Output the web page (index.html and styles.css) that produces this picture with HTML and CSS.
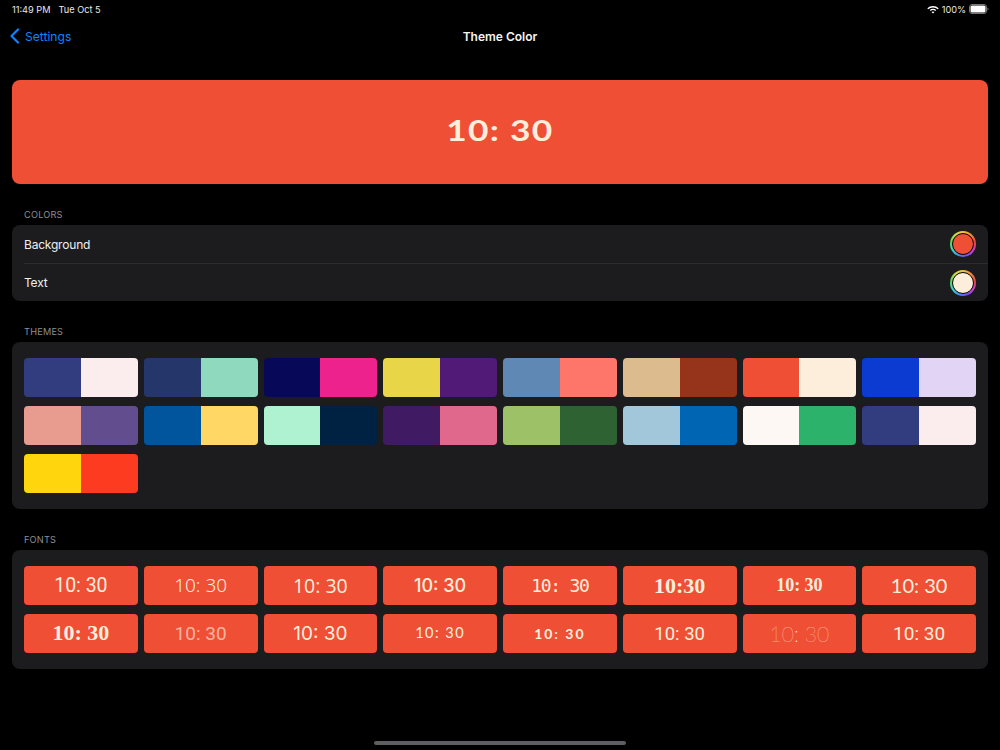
FILE: index.html
```html
<!DOCTYPE html>
<html lang="en">
<head>
<meta charset="utf-8">
<title>Theme Color</title>
<link rel="stylesheet" href="styles.css">
</head>
<body>
<div class="status">
  <div class="status-left"><span>11:49 PM</span><span>Tue Oct 5</span></div>
  <div class="status-right">
    <svg class="wifi" width="12" height="9" viewBox="0 0 12 9"><path d="M6 1a8.600 8.600 0 0 1 5.700 2.200l-.9 1A7.200 7.200 0 0 0 6 2.400a7.200 7.200 0 0 0-4.800 1.800l-.9-1A8.600 8.600 0 0 1 6 1zm0 2.700c1.200 0 2.300.4 3.200 1.200l-.9 1A3.500 3.500 0 0 0 6 5.100c-.9 0-1.700.3-2.300.8l-.9-1A4.800 4.800 0 0 1 6 3.700zm0 2.700c.6 0 1.100.2 1.500.5L6 8.500 4.500 6.900c.4-.3.900-.5 1.500-.5z" fill="#fff"/></svg>
    <span>100%</span>
    <svg class="battery" width="20" height="10" viewBox="0 0 20 10"><rect x=".5" y=".5" width="17" height="9" rx="2.500" fill="none" stroke="#777"/><rect x="1.500" y="1.500" width="15" height="7" rx="1.500" fill="#fff"/><path d="M18.500 3.500c.7.200 1 .8 1 1.500s-.3 1.300-1 1.500z" fill="#777"/></svg>
  </div>
</div>
<header class="nav">
  <div class="back">
    <svg width="11" height="16" viewBox="0 0 11 16"><path d="M9 1.500 2.500 8 9 14.500" fill="none" stroke="#0a84ff" stroke-width="2.200" stroke-linecap="round" stroke-linejoin="round"/></svg>
    <span>Settings</span>
  </div>
  <h1>Theme Color</h1>
</header>
<main class="content">
  <section class="hero"><span class="hero-time">10: 30</span></section>

  <h2 class="label">COLORS</h2>
  <section class="card list">
    <div class="row"><span>Background</span><span class="well"><span class="dot dot-bg"></span></span></div>
    <div class="row"><span>Text</span><span class="well"><span class="dot dot-text"></span></span></div>
  </section>

  <h2 class="label">THEMES</h2>
  <section class="card grid">
    <div class="swatch"><i class="c1"></i><i class="c2"></i></div>
    <div class="swatch"><i class="c3"></i><i class="c4"></i></div>
    <div class="swatch"><i class="c5"></i><i class="c6"></i></div>
    <div class="swatch"><i class="c7"></i><i class="c8"></i></div>
    <div class="swatch"><i class="c9"></i><i class="c10"></i></div>
    <div class="swatch"><i class="c11"></i><i class="c12"></i></div>
    <div class="swatch"><i class="c13"></i><i class="c14"></i></div>
    <div class="swatch"><i class="c15"></i><i class="c16"></i></div>
    <div class="swatch"><i class="c17"></i><i class="c18"></i></div>
    <div class="swatch"><i class="c19"></i><i class="c20"></i></div>
    <div class="swatch"><i class="c21"></i><i class="c22"></i></div>
    <div class="swatch"><i class="c23"></i><i class="c24"></i></div>
    <div class="swatch"><i class="c25"></i><i class="c26"></i></div>
    <div class="swatch"><i class="c27"></i><i class="c28"></i></div>
    <div class="swatch"><i class="c29"></i><i class="c30"></i></div>
    <div class="swatch"><i class="c1"></i><i class="c2"></i></div>
    <div class="swatch"><i class="c31"></i><i class="c32"></i></div>
  </section>

  <h2 class="label">FONTS</h2>
  <section class="card grid">
    <div class="font f1">10: 30</div>
    <div class="font f2">10: 30</div>
    <div class="font f3">10: 30</div>
    <div class="font f4">10: 30</div>
    <div class="font f5">10: 30</div>
    <div class="font f6">10:30</div>
    <div class="font f7">10: 30</div>
    <div class="font f8">10: 30</div>
    <div class="font f9">10: 30</div>
    <div class="font f10">10: 30</div>
    <div class="font f11">10: 30</div>
    <div class="font f12">10: 30</div>
    <div class="font f13">10: 30</div>
    <div class="font f14">10: 30</div>
    <div class="font f15">10: 30</div>
    <div class="font f16">10: 30</div>
  </section>
</main>
<div class="home"></div>
</body>
</html>
```
FILE: styles.css
```css
* { box-sizing: border-box; }
html, body { margin: 0; height: 100%; }
body {
  position: relative;
  width: 1000px;
  height: 750px;
  overflow: hidden;
  background: #000;
  color: #fff;
  font-family: "Inter", "Liberation Sans", sans-serif;
}
.status {
  height: 18px;
  padding: 0 11px 0 12px;
  display: flex;
  justify-content: space-between;
  align-items: center;
  font-size: 9.200px;
  color: #e8e8e8;
}
.status-left { display: flex; gap: 8px; }
.status-right { display: flex; align-items: center; gap: 3px; }
.nav {
  height: 36px;
  position: relative;
  display: flex;
  align-items: center;
  justify-content: center;
}
.nav h1 { margin: 0; font-size: 12px; font-weight: 600; color: #f4f4f4; }
.back {
  position: absolute;
  left: 9px;
  top: 10px;
  display: flex;
  align-items: center;
  gap: 5px;
  font-size: 12.100px;
  color: #0a84ff;
}
.content { padding: 26px 12px 0; }
.hero {
  height: 104px;
  padding-bottom: 6px;
  border-radius: 8px;
  background: #ef4f35;
  color: #fdeedc;
  display: flex;
  align-items: center;
  justify-content: center;
}
.hero-time {
  display: block;
  font-family: "Lato", sans-serif;
  font-weight: 700;
  font-size: 29px;
  letter-spacing: 1px;
  transform: scaleX(1.22);
}
.label {
  margin: 25px 0 5px 12px;
  font-size: 9.200px;
  line-height: 11px;
  font-weight: 400;
  letter-spacing: .2px;
  color: #8d8d93;
}
.card { background: #1c1c1e; border-radius: 8px; }
.list { padding: 0 0 0 12px; }
.row {
  height: 38px;
  padding-right: 12px;
  display: flex;
  align-items: center;
  justify-content: space-between;
  font-size: 12px;
  letter-spacing: -.2px;
  color: #f0f0f0;
}
.row + .row { border-top: 1px solid #2c2c2e; }
.well {
  width: 26px;
  height: 26px;
  border-radius: 50%;
  background: conic-gradient(#f6c544, #f08a3c, #e8483f, #c93fd0, #7a4df0, #3f8cf0, #3fd0c0, #5fd65a, #c8dc4a, #f6c544);
  display: flex;
  align-items: center;
  justify-content: center;
}
.dot { width: 22px; height: 22px; border-radius: 50%; border: 1px solid #000; }
.dot-bg { background: #ef4f35; }
.dot-text { background: #fdeedc; }
.grid {
  padding: 16px 12px;
  display: grid;
  grid-template-columns: repeat(8, 1fr);
  column-gap: 6px;
  row-gap: 9px;
}
.swatch {
  height: 39px;
  border-radius: 4px;
  overflow: hidden;
  display: flex;
}
.swatch i { flex: 1; }
.c1 { background: #313d7e; } .c2 { background: #fbecee; }
.c3 { background: #24366a; } .c4 { background: #8fdabf; }
.c5 { background: #070958; } .c6 { background: #ee228d; }
.c7 { background: #e8d548; } .c8 { background: #501a76; }
.c9 { background: #5f88b5; } .c10 { background: #fe766a; }
.c11 { background: #dcbb8f; } .c12 { background: #95341b; }
.c13 { background: #ef4f35; } .c14 { background: #fdeedc; }
.c15 { background: #0b3bd0; } .c16 { background: #e1d4f4; }
.c17 { background: #e89c90; } .c18 { background: #624d8e; }
.c19 { background: #01559d; } .c20 { background: #ffd764; }
.c21 { background: #aef2d2; } .c22 { background: #002242; }
.c23 { background: #401a62; } .c24 { background: #e0688c; }
.c25 { background: #9cc166; } .c26 { background: #2e6232; }
.c27 { background: #a2c7da; } .c28 { background: #0066b4; }
.c29 { background: #fdf8f4; } .c30 { background: #2cb26b; }
.c31 { background: #ffd60e; } .c32 { background: #fd3b20; }
.font {
  height: 39px;
  border-radius: 4px;
  background: #ef4f35;
  color: #fdeedc;
  display: flex;
  align-items: center;
  justify-content: center;
  white-space: pre;
}
.f1 { font-family: "Roboto", sans-serif; font-size: 19.500px; font-weight: 400; }
.f2 { font-family: "Noto Sans", sans-serif; font-size: 19px; font-weight: 300; padding-bottom: 2px; }
.f3 { font-family: "Open Sans", sans-serif; font-size: 19.500px; }
.f4 { font-family: "Inter", sans-serif; font-size: 18px; font-weight: 500; }
.f5 { font-family: "DejaVu Sans Mono", monospace; font-size: 18px; letter-spacing: -1.300px; }
.f6 { font-family: "Liberation Serif", serif; font-weight: 700; font-size: 22px; }
.f7 { font-family: "Liberation Serif", serif; font-weight: 700; font-size: 18px; }
.f8 { font-family: "Lato", sans-serif; font-size: 20px; font-weight: 400; padding-bottom: 2px; }
.f9 { font-family: "Liberation Serif", serif; font-weight: 700; font-size: 22px; padding-bottom: 2px; }
.f10 { font-family: "Roboto", sans-serif; font-size: 19px; font-weight: 400; color: rgba(253, 238, 220, .65); }
.f11 { font-family: "Inter", sans-serif; font-size: 19px; font-weight: 400; }
.f12 { font-family: "Lato", sans-serif; font-size: 14.500px; font-weight: 400; letter-spacing: 1.500px; padding-bottom: 2px; }
.f13 { font-family: "Lato", sans-serif; font-size: 14px; font-weight: 700; letter-spacing: 2px; }
.f14 { font-family: "Roboto", sans-serif; font-size: 18.500px; }
.f15 { font-family: "Lato", sans-serif; font-size: 21px; font-weight: 100; }
.f16 { font-family: "Roboto", sans-serif; font-size: 19px; }
.home {
  position: absolute;
  left: 374px;
  bottom: 5px;
  width: 252px;
  height: 4px;
  border-radius: 2px;
  background: #5e5e60;
}
```
